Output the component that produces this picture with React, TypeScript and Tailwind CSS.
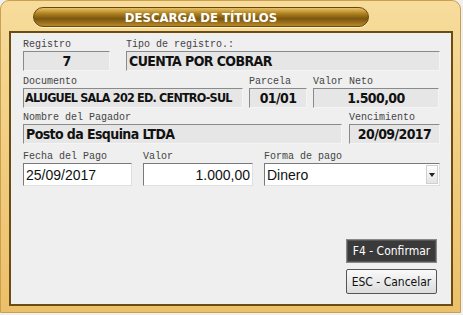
const label = "font-['Liberation_Mono',monospace] text-[10px] leading-[12px] text-[#444] whitespace-nowrap";
const valueBase =
  "h-[20px] border border-t-[#8a8a8a] border-l-[#8a8a8a] border-b-[#f4f4f4] border-r-[#f4f4f4] bg-[#e4e4e4]/80 flex items-center font-['DejaVu_Sans',sans-serif] font-stretch-semi-condensed font-bold text-[#111] leading-none whitespace-nowrap overflow-hidden";
const valueBox = `${valueBase} px-[2px] text-[14px] tracking-[-0.6px]`;
const docBox = `${valueBase} px-[1px] text-[12.5px] tracking-[-0.8px]`;
const inputBox =
  "h-[23px] border border-t-[#7a7a7a] border-l-[#7a7a7a] border-b-[#e0e0e0] border-r-[#e0e0e0] bg-white flex items-center px-[2px] font-['Liberation_Sans',sans-serif] text-[14px] text-[#111] leading-none";
const btnFont = "font-['DejaVu_Sans',sans-serif] font-stretch-semi-condensed text-[12px]";

function Field({ title, w, children, boxClass }: { title: string; w: string; children: React.ReactNode; boxClass: string }) {
  return (
    <div className={`flex flex-col ${w}`}>
      <span className={label}>{title}</span>
      <div className={boxClass}>{children}</div>
    </div>
  );
}

export default function App() {
  return (
    <div className="w-[463px] h-[315px] bg-[#f0f0f0] font-['Liberation_Sans',sans-serif]">
      <div className="w-[461px] h-[313px] rounded-t-[9px] border border-[#caa04e] bg-gradient-to-b from-[#f7dc9c] via-[#f1cd80] to-[#ecc06a] flex flex-col">
        <div className="h-[30px] pl-[32px] pt-[6px]">
          <div className="w-[336px] h-[20px] rounded-full border border-[#6a4a0c] bg-[linear-gradient(to_bottom,#e8c265,#a77a1c_35%,#7a560e_60%,#b8882a)] flex items-center justify-center shadow-[0_1px_0_#fff3c8]">
            <span className="font-['DejaVu_Sans',sans-serif] font-stretch-semi-condensed font-bold text-[13px] text-white leading-none">
              DESCARGA DE TÍTULOS
            </span>
          </div>
        </div>
        <div className="ml-[8px] w-[444px] h-[275px] border-2 border-[#6b4d14] bg-[#efefef] pl-[12px] pr-[11px] pt-[6px] flex flex-col">
          <div className="flex gap-[16px]">
            <Field title="Registro" w="w-[87px]" boxClass={`${valueBox} justify-center`}>7</Field>
            <Field title="Tipo de registro.:" w="w-[314px]" boxClass={valueBox}>CUENTA POR COBRAR</Field>
          </div>
          <div className="flex gap-[6px] mt-[5px]">
            <Field title="Documento" w="w-[220px]" boxClass={docBox}>ALUGUEL SALA 202 ED. CENTRO-SUL</Field>
            <Field title="Parcela" w="w-[58px]" boxClass={`${valueBox} justify-center`}>01/01</Field>
            <Field title="Valor Neto" w="w-[126px]" boxClass={`${valueBox} justify-center`}>1.500,00</Field>
          </div>
          <div className="flex gap-[7px] mt-[4px]">
            <Field title="Nombre del Pagador" w="w-[319px]" boxClass={valueBox}>Posto da Esquina LTDA</Field>
            <Field title="Vencimiento" w="w-[91px]" boxClass={`${valueBox} justify-center`}>20/09/2017</Field>
          </div>
          <div className="flex gap-[11px] mt-[7px]">
            <Field title="Fecha del Pago" w="w-[109px]" boxClass={inputBox}>25/09/2017</Field>
            <Field title="Valor" w="w-[110px]" boxClass={`${inputBox} justify-end`}>1.000,00</Field>
            <Field title="Forma de pago" w="w-[176px]" boxClass={`${inputBox} justify-between pr-[1px]`}>
              <span>Dinero</span>
              <span className="w-[12px] h-[19px] flex items-center justify-center bg-gradient-to-b from-white to-[#e4e4e4] border border-[#cfcfcf]">
                <svg width="6" height="4" viewBox="0 0 6 4">
                  <path d="M0 0h6L3 4z" fill="#222" />
                </svg>
              </span>
            </Field>
          </div>
          <div className="flex-1" />
          <div className="flex flex-col items-end gap-[6px] pr-[3px] pb-[10px]">
            <button className={`w-[91px] h-[24px] border border-[#888] bg-[#3a3a3a] text-white shadow-[inset_0_0_0_1px_#555] ${btnFont}`}>
              F4 - Confirmar
            </button>
            <button className={`w-[91px] h-[25px] border border-[#555] rounded-[2px] bg-gradient-to-b from-[#fafafa] to-[#dcdcdc] text-[#111] ${btnFont}`}>
              ESC - Cancelar
            </button>
          </div>
        </div>
      </div>
    </div>
  );
}
